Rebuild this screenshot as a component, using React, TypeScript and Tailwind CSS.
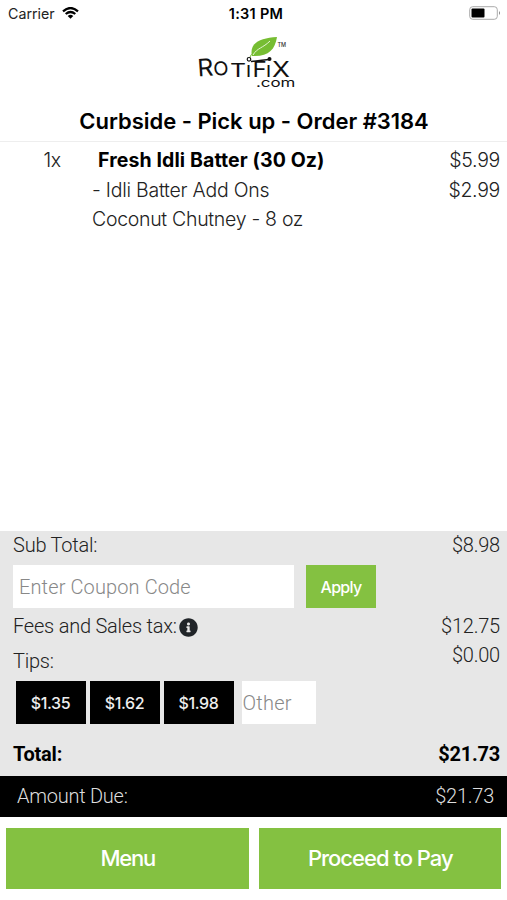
import { FaInfoCircle } from "react-icons/fa";

const TIPS = ["$1.35", "$1.62", "$1.98"];

function Logo() {
  return (
    <svg width="108" height="56" viewBox="194 34 108 56" aria-label="Rotifix.com">
      <path d="M252 56C249 43 260 38 277 37C275 50 268 57 252 56Z" fill="#76bd32" />
      <path d="M249.500 58Q251 54 254 52" stroke="#76bd32" strokeWidth="1" fill="none" />
      <path d="M253 55C257 48 263 48 270 41" stroke="#e5f5d4" strokeWidth="1" fill="none" />
      <text x="277.500" y="46.500" fontFamily="Inter, sans-serif" fontSize="5.500" fontWeight="500" fill="#333">TM</text>
      <g fontFamily="Inter, sans-serif" fill="#111" fontWeight="400">
        <text transform="translate(198 76.500) rotate(-4) scale(1.030 1)" fontSize="24">R</text>
        <text transform="translate(214 76) rotate(-6) scale(1.050 1)" fontSize="19">O</text>
        <text transform="translate(230 77) scale(1.380 1)" fontSize="18">T</text>
        <text x="246" y="76.500" fontSize="21">ı</text>
        <text transform="translate(252.500 77) scale(1.150 1)" fontSize="21">F</text>
        <text x="266" y="76.500" fontSize="21">ı</text>
        <text transform="translate(272 77) scale(1.250 1)" fontSize="21">X</text>
        <text transform="translate(256 87) scale(1.350 1)" fontSize="12.500">.com</text>
      </g>
      <circle cx="249" cy="59.300" r="1.800" fill="#fff" stroke="#111" strokeWidth="1.200" />
      <path d="M251 61.500Q261 60.500 269 59.500" stroke="#111" strokeWidth="1.400" fill="none" />
      <circle cx="269.500" cy="59" r="2" fill="#111" />
    </svg>
  );
}

function StatusBar() {
  return (
    <div className="relative flex h-7 items-center justify-between pl-2 pr-[6px] font-[Inter,sans-serif] text-[#222]">
      <div className="flex items-center gap-[7px]">
        <span className="text-[14.250px] leading-7">Carrier</span>
        <svg className="-mt-[2px]" width="17" height="12" viewBox="0 0 17 12" fill="none" stroke="#000" strokeWidth="2.200">
          <path d="M1 4.300Q8.500-2.300 16 4.300M3.700 7Q8.500 3 13.300 7" />
          <path d="M8.500 11.700L5.700 8.900Q8.500 6.800 11.300 8.900Z" fill="#000" stroke="none" />
        </svg>
      </div>
      <span className="absolute inset-x-0 pl-[5px] text-center text-[14.500px] font-semibold leading-7 tracking-[0.300px] text-black">1:31 PM</span>
      <svg className="-mt-[2px]" width="32" height="15" viewBox="0 0 32 15">
        <rect x="0.700" y="0.700" width="27.600" height="12.600" rx="3" fill="white" stroke="#aaa" />
        <rect x="2.500" y="2.500" width="13" height="9" rx="1" />
        <path d="M30 5Q32 7 30 9Z" fill="#888" />
      </svg>
    </div>
  );
}

export default function App() {
  return (
    <main className="flex h-[900px] w-[507px] flex-col overflow-hidden bg-white font-[Inter,sans-serif] text-[#222]">
      <StatusBar />
      <header className="flex h-[114px] flex-col items-center border-b border-[#eee] pt-[6px]">
        <div className="pr-[12px]"><Logo /></div>
        <h1 className="mt-[15px] pl-px text-[22px] font-semibold leading-[33px] tracking-[-0.020px] text-black">Curbside - Pick up - Order #3184</h1>
      </header>
      <section className="flex h-[389px] pt-[4px] text-[19.500px] font-light leading-[29.500px] tracking-[-0.300px]">
        <div className="w-[92px] pl-[43.500px]">1x</div>
        <div className="grow">
          <p className="pl-[6px] font-bold tracking-[0.110px] text-black">Fresh Idli Batter (30 Oz)</p>
          <p className="tracking-[-0.240px]">- Idli Batter Add Ons</p>
          <p>Coconut Chutney - 8 oz</p>
        </div>
        <div className="pr-[7px] text-right">
          <p>$5.99</p>
          <p>$2.99</p>
        </div>
      </section>
      <section className="h-[245px] bg-[#e7e7e7] pl-[13px] pr-[7px] font-[Roboto,sans-serif] text-[20px] font-light leading-[30px] tracking-[-0.220px]">
        <div className="-mt-px flex h-[35px] justify-between">
          <span>Sub Total:</span>
          <span>$8.98</span>
        </div>
        <div className="flex h-[43px] gap-[12px]">
          <input className="w-[281px] bg-white pl-[6px] tracking-[0.120px] placeholder:text-[#888]" placeholder="Enter Coupon Code" />
          <button className="w-[70px] bg-[#84c141] font-[Inter,sans-serif] text-[16px] font-medium tracking-[-0.700px] text-white">Apply</button>
        </div>
        <div className="flex justify-between pt-[3px]">
          <div>
            <p className="flex items-center">Fees and Sales tax:<FaInfoCircle className="ml-[2px] mt-[2px] size-[19px] text-[#202428]" /></p>
            <p className="pt-[5px]">Tips:</p>
          </div>
          <div className="text-right">
            <p>$12.75</p>
            <p className="-mt-px">$0.00</p>
          </div>
        </div>
        <div className="mt-[5px] flex h-[43px] gap-[4px] pl-[2.500px]">
          {TIPS.map((tip) => (
            <button key={tip} className="w-[70px] bg-black font-[Inter,sans-serif] text-[16px] font-medium tracking-[-0.350px] text-[#eee]">{tip}</button>
          ))}
          <input className="ml-[4px] w-[74px] bg-white pl-px tracking-[0.250px] placeholder:text-[#888]" placeholder="Other" />
        </div>
        <div className="mt-[15px] flex justify-between font-bold text-black">
          <span>Total:</span>
          <span>$21.73</span>
        </div>
      </section>
      <div className="flex h-[41px] items-center justify-between bg-black pb-[2px] pl-[17px] pr-[13px] font-[Roboto,sans-serif] text-[20px] font-light tracking-[-0.250px] text-[#ddd]">
        <span>Amount Due:</span>
        <span>$21.73</span>
      </div>
      <footer className="flex gap-[10px] px-[6px] pt-[11px]">
        <button className="h-[61px] w-[243px] bg-[#84c141] pl-px text-[22px] font-medium tracking-[-1.200px] text-white">Menu</button>
        <button className="h-[61px] w-[243px] bg-[#84c141] pl-px text-[22px] font-medium tracking-[-1px] text-white">Proceed to Pay</button>
      </footer>
    </main>
  );
}
